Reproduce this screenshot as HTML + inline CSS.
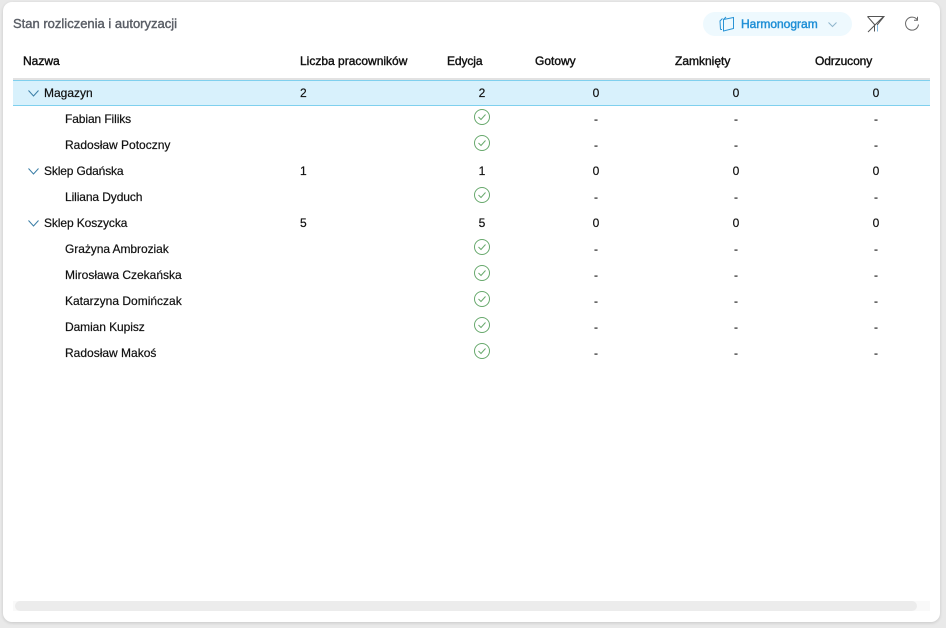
<!DOCTYPE html>
<html lang="pl"><head><meta charset="utf-8"><title>Stan rozliczenia i autoryzacji</title>
<style>
html,body{margin:0;padding:0;width:946px;height:628px;overflow:hidden;background:#e9e9e9;font-family:"Liberation Sans",sans-serif;font-size:12px;color:#111}
#card{position:absolute;left:3px;top:2px;width:937px;height:620px;background:#fff;border-radius:9px;box-shadow:0 1px 3px rgba(0,0,0,.14)}
.t{position:absolute;white-space:nowrap;line-height:14px;height:14px;-webkit-text-stroke:.2px #111}
.h{top:54px;-webkit-text-stroke:.4px #111}
.c{width:40px;text-align:center}
svg{position:absolute;overflow:visible}
#sel{position:absolute;left:13px;top:80px;width:917px;height:24px;background:#d8f1fc;border-top:1px solid #7fd0ee;border-bottom:1px solid #7fd0ee}
</style></head><body>
<div id="card"></div>
<div class="t" style="left:13px;top:17px;font-size:13px;color:#5a5e66;-webkit-text-stroke:.4px #5a5e66">Stan rozliczenia i autoryzacji</div>

<div style="position:absolute;left:703px;top:12px;width:149px;height:24px;border-radius:12px;background:#eef9fe"></div>
<svg style="left:719px;top:16px" width="17" height="16" fill="none" stroke="#2a93d5" stroke-width="1"><path d="M4.5 3.5L14.5 1.5V12.5L4.5 15ZM4.5 3.5L7 1M1.5 13.5L1 5L3.5 2.5M1.5 13.5H3"/></svg>
<div class="t" style="left:741px;top:17px;color:#1f8fd6;-webkit-text-stroke:.45px #1f8fd6">Harmonogram</div>
<svg style="left:828px;top:22px" width="9" height="5" fill="none" stroke="#8fb5cc"><path d="M.5 .5L4.5 4.5L8.5 .5"/></svg>

<svg style="left:867px;top:15px" width="18" height="18" fill="none" stroke="#555" stroke-width="1"><path d="M.5 1.5H17L10.5 9.5V14M.5 1.5L7.5 9.5V16.5M1 17L16 2"/><path d="M10.5 10V16.5" stroke="#7fb6dc"/></svg>
<svg style="left:904px;top:16px" width="16" height="16" fill="none" stroke="#666" stroke-width="1"><path d="M13.3 3.8A6.5 6.5 0 1 0 14.5 8.5"/><path d="M13.5 .8V4.3H10" stroke="#666"/></svg>

<div class="t h" style="left:23px">Nazwa</div>
<div class="t h" style="left:300px">Liczba pracowników</div>
<div class="t h" style="left:447px;letter-spacing:-.1px">Edycja</div>
<div class="t h" style="left:535px">Gotowy</div>
<div class="t h" style="left:675px">Zamknięty</div>
<div class="t h" style="left:815px;letter-spacing:-.1px">Odrzucony</div>

<div style="position:absolute;left:13px;top:78px;width:917px;height:2px;background:#e2e2e2"></div>
<div id="sel"></div>

<svg style="left:28px;top:90px" width="11" height="7" fill="none" stroke="#3b7ea6"><path d="M.5 .5L5.5 6L10.5 .5"/></svg>
<div class="t" style="left:44px;top:86px">Magazyn</div>
<div class="t" style="left:300px;top:86px">2</div>
<div class="t c" style="left:462px;top:86px">2</div>
<div class="t c" style="left:576px;top:86px">0</div>
<div class="t c" style="left:716px;top:86px">0</div>
<div class="t c" style="left:856px;top:86px">0</div>

<div class="t" style="left:65px;top:112px;letter-spacing:-.1px">Fabian Filiks</div>
<svg style="left:474px;top:109px" width="16" height="16" fill="none" stroke="#68a96d"><circle cx="8" cy="8" r="7.5"/><path d="M4.5 8L7 10.5L11.5 5.5"/></svg>
<div class="t c" style="left:576px;top:112px">-</div><div class="t c" style="left:716px;top:112px">-</div><div class="t c" style="left:856px;top:112px">-</div>

<div class="t" style="left:65px;top:138px">Radosław Potoczny</div>
<svg style="left:474px;top:135px" width="16" height="16" fill="none" stroke="#68a96d"><circle cx="8" cy="8" r="7.5"/><path d="M4.5 8L7 10.5L11.5 5.5"/></svg>
<div class="t c" style="left:576px;top:138px">-</div><div class="t c" style="left:716px;top:138px">-</div><div class="t c" style="left:856px;top:138px">-</div>

<svg style="left:28px;top:168px" width="11" height="7" fill="none" stroke="#3b7ea6"><path d="M.5 .5L5.5 6L10.5 .5"/></svg>
<div class="t" style="left:44px;top:164px;letter-spacing:-.15px">Sklep Gdańska</div>
<div class="t" style="left:300px;top:164px">1</div>
<div class="t c" style="left:462px;top:164px">1</div>
<div class="t c" style="left:576px;top:164px">0</div><div class="t c" style="left:716px;top:164px">0</div><div class="t c" style="left:856px;top:164px">0</div>

<div class="t" style="left:65px;top:190px;letter-spacing:-.1px">Liliana Dyduch</div>
<svg style="left:474px;top:187px" width="16" height="16" fill="none" stroke="#68a96d"><circle cx="8" cy="8" r="7.5"/><path d="M4.5 8L7 10.5L11.5 5.5"/></svg>
<div class="t c" style="left:576px;top:190px">-</div><div class="t c" style="left:716px;top:190px">-</div><div class="t c" style="left:856px;top:190px">-</div>

<svg style="left:28px;top:220px" width="11" height="7" fill="none" stroke="#3b7ea6"><path d="M.5 .5L5.5 6L10.5 .5"/></svg>
<div class="t" style="left:44px;top:216px;letter-spacing:-.1px">Sklep Koszycka</div>
<div class="t" style="left:300px;top:216px">5</div>
<div class="t c" style="left:462px;top:216px">5</div>
<div class="t c" style="left:576px;top:216px">0</div><div class="t c" style="left:716px;top:216px">0</div><div class="t c" style="left:856px;top:216px">0</div>

<div class="t" style="left:65px;top:242px;letter-spacing:-.06px">Grażyna Ambroziak</div>
<svg style="left:474px;top:239px" width="16" height="16" fill="none" stroke="#68a96d"><circle cx="8" cy="8" r="7.5"/><path d="M4.5 8L7 10.5L11.5 5.5"/></svg>
<div class="t c" style="left:576px;top:242px">-</div><div class="t c" style="left:716px;top:242px">-</div><div class="t c" style="left:856px;top:242px">-</div>

<div class="t" style="left:65px;top:268px">Mirosława Czekańska</div>
<svg style="left:474px;top:265px" width="16" height="16" fill="none" stroke="#68a96d"><circle cx="8" cy="8" r="7.5"/><path d="M4.5 8L7 10.5L11.5 5.5"/></svg>
<div class="t c" style="left:576px;top:268px">-</div><div class="t c" style="left:716px;top:268px">-</div><div class="t c" style="left:856px;top:268px">-</div>

<div class="t" style="left:65px;top:294px">Katarzyna Domińczak</div>
<svg style="left:474px;top:291px" width="16" height="16" fill="none" stroke="#68a96d"><circle cx="8" cy="8" r="7.5"/><path d="M4.5 8L7 10.5L11.5 5.5"/></svg>
<div class="t c" style="left:576px;top:294px">-</div><div class="t c" style="left:716px;top:294px">-</div><div class="t c" style="left:856px;top:294px">-</div>

<div class="t" style="left:65px;top:320px;letter-spacing:-.08px">Damian Kupisz</div>
<svg style="left:474px;top:317px" width="16" height="16" fill="none" stroke="#68a96d"><circle cx="8" cy="8" r="7.5"/><path d="M4.5 8L7 10.5L11.5 5.5"/></svg>
<div class="t c" style="left:576px;top:320px">-</div><div class="t c" style="left:716px;top:320px">-</div><div class="t c" style="left:856px;top:320px">-</div>

<div class="t" style="left:65px;top:346px">Radosław Makoś</div>
<svg style="left:474px;top:343px" width="16" height="16" fill="none" stroke="#68a96d"><circle cx="8" cy="8" r="7.5"/><path d="M4.5 8L7 10.5L11.5 5.5"/></svg>
<div class="t c" style="left:576px;top:346px">-</div><div class="t c" style="left:716px;top:346px">-</div><div class="t c" style="left:856px;top:346px">-</div>

<div style="position:absolute;left:13px;top:601px;width:917px;height:10px;background:#f9f9f9"></div>
<div style="position:absolute;left:15px;top:601px;width:902px;height:10px;border-radius:5px;background:#ececec"></div>
</body></html>
